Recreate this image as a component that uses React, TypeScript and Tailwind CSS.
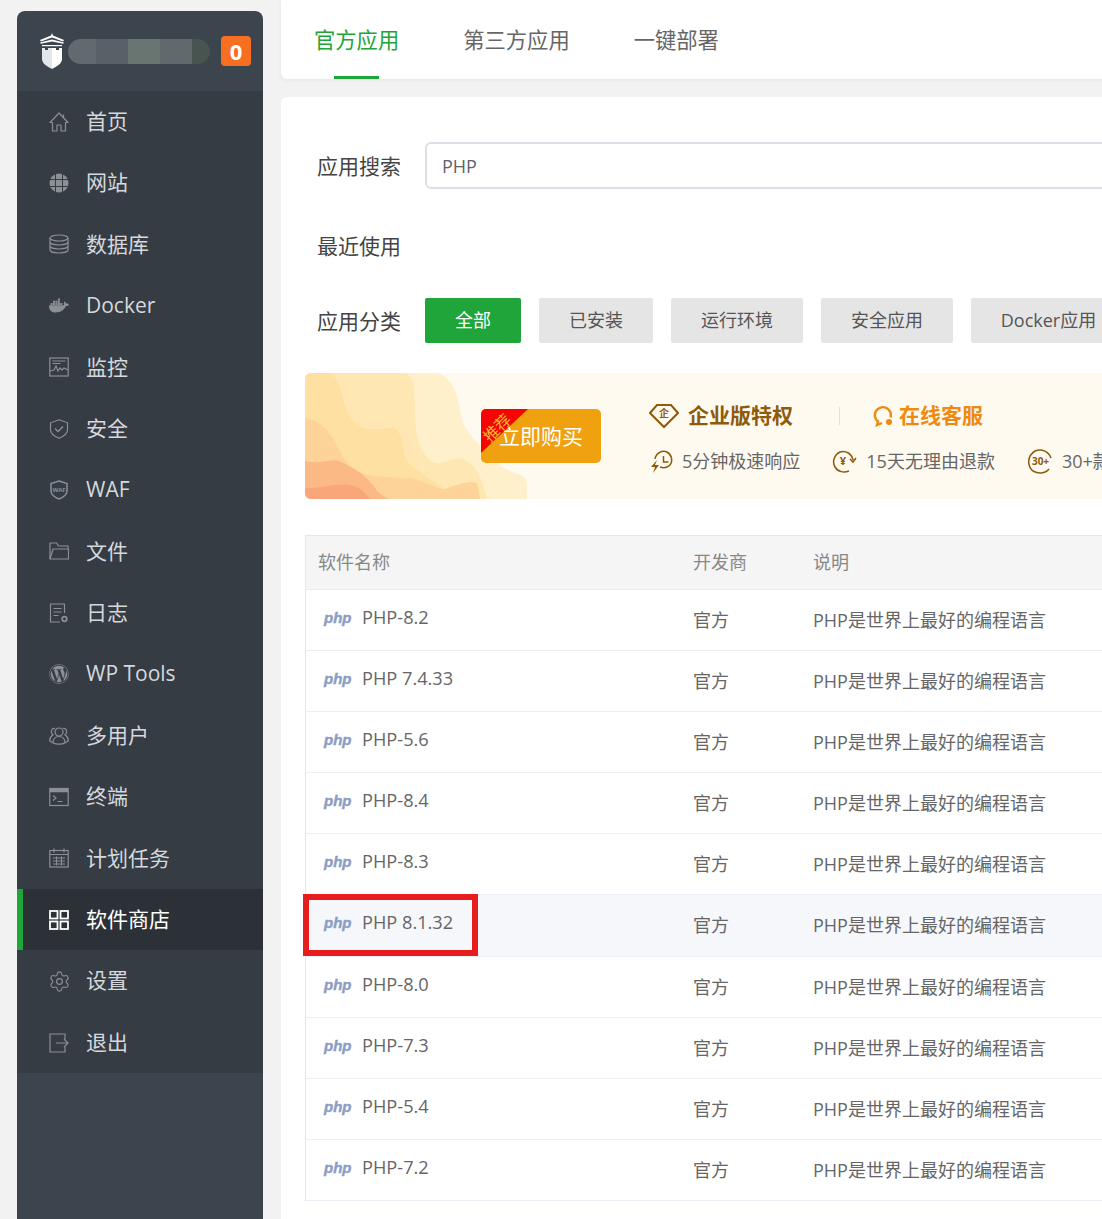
import type { ReactNode } from "react";
import { Settings } from "lucide-react";
import { FaDocker, FaWordpress } from "react-icons/fa";

const Svg = ({ children }: { children: ReactNode }) => (
    <svg width="20" height="20" viewBox="0 0 20 20" fill="none" stroke="currentColor" strokeWidth="1.2">
        {children}
    </svg>
);

const HomeIcon = () => (
    <Svg>
        <path d="M10 1L1 10.500h2.500V19H8v-6h4v6h4.500v-8.500H19z" strokeLinejoin="round" />
        <path d="M14.500 2.500v3" />
    </Svg>
);

const GlobeIcon = () => (
    <Svg>
        <circle cx="10" cy="10" r="9.500" fill="currentColor" stroke="none" />
        <path d="M0 6.500h20M0 13.500h20M6.500 0v20M13.500 0v20" stroke="#363c44" strokeWidth="1" />
    </Svg>
);

const DatabaseIcon = () => (
    <Svg>
        <ellipse cx="10" cy="4" rx="9" ry="3" />
        <path d="M1 4v12c0 1.700 4 3 9 3s9-1.300 9-3V4" />
        <path d="M1 8c0 1.700 4 3 9 3s9-1.300 9-3M1 12c0 1.700 4 3 9 3s9-1.300 9-3" />
    </Svg>
);

const MonitorIcon = () => (
    <Svg>
        <rect x="0.800" y="1" width="18.400" height="18" />
        <path d="M3.500 4h13M3.500 6.500h8" />
        <path d="M1 14l4-1 2-4 2 5 2-3 2 2 2-2 4 2" />
    </Svg>
);

const ShieldIcon = () => (
    <Svg>
        <path d="M10 0.800l8.500 3v7c0 3.600-4.500 6.800-8.500 8.400-4-1.600-8.500-4.800-8.500-8.400v-7z" />
        <path d="M6 9.500l3 3 5-5" strokeWidth="1.400" />
    </Svg>
);

const WafIcon = () => (
    <svg width="20" height="20" viewBox="0 0 20 20">
        <path d="M10 1l8 2.600v7.200c0 3.600-4 6.800-8 8.200-4-1.400-8-4.600-8-8.200V3.600z" fill="none" stroke="currentColor" strokeWidth="1.500" />
        <text x="10" y="11.500" textAnchor="middle" fontSize="6" fontWeight="700" fill="currentColor">WAF</text>
    </svg>
);

const FolderIcon = () => (
    <Svg>
        <path d="M1 18V2h6.500l2 3H19v3" />
        <path d="M1 18l3-10h15.500V18z" strokeLinejoin="round" />
    </Svg>
);

const LogIcon = () => (
    <Svg>
        <path d="M15.500 10V1H1.500v18H11" />
        <path d="M4.500 5.500h8M4.500 9h8M4.500 12.500h5" />
        <circle cx="15.500" cy="16" r="2.300" strokeWidth="1.700" />
    </Svg>
);

const UsersIcon = () => (
    <Svg>
        <circle cx="10" cy="6" r="4" />
        <path d="M4 17c0-4 2.500-6.500 6-6.500s6 2.500 6 6.500c-3 1.500-9 1.500-12 0z" />
        <path d="M6 2.500C3.500 2 2 4 2.500 6.500c.2 1 .8 1.700 1.500 2.200C2 10 .5 12 .8 15l3 1.500M14 2.500c2.500-.5 4 1.500 3.500 4-.2 1-.8 1.700-1.500 2.200 2 1.300 3.500 3.300 3.200 6.300l-3 1.500" />
    </Svg>
);

const TerminalIcon = () => (
    <Svg>
        <rect x="0.800" y="1.500" width="18.400" height="17" />
        <path d="M1 3.500h18" strokeWidth="3.500" />
        <path d="M4 8.500l3 2.500-3 2.500M8.500 14.500h5" />
    </Svg>
);

const CalendarIcon = () => (
    <Svg>
        <rect x="0.800" y="2.500" width="18.400" height="16.500" />
        <path d="M5 0.500v4M15 0.500v4M1 6.500h18" />
        <path d="M4 10h12M4 13h12M4 16h12M7.500 8.500v9M12.500 8.500v9" strokeWidth="1" />
    </Svg>
);

const GridIcon = () => (
    <Svg>
        <g strokeWidth="1.800">
            <rect x="1" y="1" width="7.500" height="7.500" />
            <rect x="11.500" y="1" width="7.500" height="7.500" />
            <rect x="1" y="11.500" width="7.500" height="7.500" />
            <rect x="11.500" y="11.500" width="7.500" height="7.500" />
        </g>
    </Svg>
);

const ExitIcon = () => (
    <Svg>
        <path d="M16 6V1H1v18h15v-5" />
        <path d="M7 10h12M15 6l4 4-4 4" />
    </Svg>
);

const menus: { name: string; icon: ReactNode }[] = [
    { name: "首页", icon: <HomeIcon /> },
    { name: "网站", icon: <GlobeIcon /> },
    { name: "数据库", icon: <DatabaseIcon /> },
    { name: "Docker", icon: <FaDocker size={21} /> },
    { name: "监控", icon: <MonitorIcon /> },
    { name: "安全", icon: <ShieldIcon /> },
    { name: "WAF", icon: <WafIcon /> },
    { name: "文件", icon: <FolderIcon /> },
    { name: "日志", icon: <LogIcon /> },
    { name: "WP Tools", icon: <FaWordpress size={20} /> },
    { name: "多用户", icon: <UsersIcon /> },
    { name: "终端", icon: <TerminalIcon /> },
    { name: "计划任务", icon: <CalendarIcon /> },
    { name: "软件商店", icon: <GridIcon /> },
    { name: "设置", icon: <Settings size={23} strokeWidth={1.200} className="shrink-0 -mx-[1.500px]" /> },
    { name: "退出", icon: <ExitIcon /> },
];

const filtros = [
    { name: "全部", w: "w-[96px]" },
    { name: "已安装", w: "w-[114px]" },
    { name: "运行环境", w: "w-[132px]" },
    { name: "安全应用", w: "w-[132px]" },
    { name: "Docker应用", w: "w-[155px]" },
];

const software = [
    "PHP-8.2", "PHP 7.4.33", "PHP-5.6", "PHP-8.4", "PHP-8.3",
    "PHP 8.1.32", "PHP-8.0", "PHP-7.3", "PHP-5.4", "PHP-7.2",
];

const Logo = () => (
    <svg width="26" height="36" viewBox="0 0 26 36" className="shrink-0">
        <path d="M13 0l1 2.500 11 4.500-1 1.500-11-4-11 4-1-1.500 11-4.500z" fill="#fff" />
        <path d="M1 9.500l12-3 12 3-.800 1.300L13 8.500 1.800 10.800z" fill="#fff" />
        <path d="M3 12h20v1.200H3z" fill="#fff" />
        <path d="M13 15H9v2H6v-2H3v11c0 4 4 7 10 10z" fill="#e4e6ea" />
        <path d="M13 15h4v2h3v-2h3v11c0 4-4 7-10 10z" fill="#fff" />
    </svg>
);

const Waves = () => (
    <svg width="223" height="126" viewBox="0 0 223 126" className="shrink-0">
        <path d="M0 0H132C148 4 153 22 156 42C160 62 176 72 195 92C205 102 222 98 222 112V126H0z" fill="#fff0cc" />
        <path d="M0 0H100C110 4 109 15 110 30C111 50 108 72 126 88C140 96 150 78 162 88C176 98 178 112 182 126H0z" fill="#ffe7b3" />
        <path d="M0 0H26C36 8 36 20 40 32C46 54 62 60 88 54C98 60 98 72 100 84C108 100 130 104 150 126H0z" fill="#ffe0a3" />
        <path d="M0 45C18 48 28 62 38 84C50 102 62 104 105 105C122 108 130 116 140 116C155 110 165 108 172 110L175 126H0z" fill="#fdd39a" />
        <path d="M0 88C18 92 28 84 36 89C50 96 62 102 72 118C76 122 80 124 84 126H0z" fill="#fbb985" />
        <path d="M0 115C14 116 30 110 45 112C55 114 60 120 65 126H0z" fill="#f9a67a" />
    </svg>
);

const DiamondIcon = () => (
    <svg width="30" height="26" viewBox="0 0 30 26" fill="none" stroke="#8e5a0b" strokeWidth="2" className="shrink-0">
        <path d="M8 2h14l7 8-14 14L1 10z" />
        <text x="15" y="14" textAnchor="middle" fontSize="10" fontWeight="700" fill="#8e5a0b" stroke="none">企</text>
    </svg>
);

const ChatIcon = () => (
    <svg width="23" height="22" viewBox="0 0 23 22" fill="none" stroke="#ee8a12" strokeWidth="2.400" className="shrink-0">
        <path d="M18.500 12.500A8 8 0 1 0 6 16.500L5 20l5-2" />
        <circle cx="17" cy="17" r="3" fill="#ee8a12" stroke="none" />
    </svg>
);

const SpeedIcon = () => (
    <svg width="25" height="25" viewBox="0 0 25 25" fill="none" stroke="#8e5a0b" strokeWidth="1.500" className="shrink-0">
        <path d="M6 10C7 4 13 1 18 3c5 3 6 9 3 13-3 3-7 3-10 2" />
        <path d="M14.500 7v6h5" />
        <path d="M8 11l-6 7h4l-2 6 6-8H6z" fill="#8e5a0b" stroke="none" />
    </svg>
);

const RefundIcon = () => (
    <svg width="25" height="25" viewBox="0 0 25 25" fill="none" stroke="#8e5a0b" strokeWidth="1.500" className="shrink-0">
        <path d="M21 11C20 5 14 1 8 3 2 6 0 13 3 18c3 5 9 6 14 4" />
        <path d="M18 10l3 3 3-4" />
        <text x="11" y="16" textAnchor="middle" fontSize="11" fontWeight="700" fill="#8e5a0b" stroke="none">¥</text>
    </svg>
);

const PluginIcon = () => (
    <svg width="25" height="25" viewBox="0 0 25 25" fill="none" stroke="#8e5a0b" strokeWidth="1.500" className="shrink-0">
        <path d="M23 9C21 3 14-1 7 2-1 7-1 17 5 22c5 3 12 3 16-2" />
        <text x="12.500" y="16" textAnchor="middle" fontSize="10" fontWeight="700" fill="#8e5a0b" stroke="none">30+</text>
    </svg>
);

export default function App() {
    return (
        <div className="flex w-[1102px] h-[1219px] overflow-hidden bg-[#f2f2f2] font-['Open_Sans','Noto_Sans_CJK_SC',sans-serif]">
            {/* Sidebar */}
            <aside className="w-[246px] shrink-0 ml-[17px] mt-[11px] mr-[18px] bg-[#3c444d] rounded-t-lg">
                <div className="flex items-center h-[80px] pl-[22px] pr-[12px]">
                    <Logo />
                    <div className="flex h-[25px] w-[142px] ml-[3px] rounded-full overflow-hidden blur-[0.5px]">
                        <div className="w-[28px] bg-[#626a70]" />
                        <div className="w-[32px] bg-[#596168]" />
                        <div className="w-[32px] bg-[#687571]" />
                        <div className="w-[32px] bg-[#62696c]" />
                        <div className="w-[18px] bg-[#47544f]" />
                    </div>
                    <span className="flex items-center justify-center w-[30px] h-[30px] ml-auto rounded-[4px] bg-[#f96f22] text-white text-[22px] font-bold">0</span>
                </div>
                <nav className="bg-[#363c44]">
                    {menus.map((item) => {
                        const activo = item.name === "软件商店";
                        return (
                            <div
                                key={item.name}
                                className={activo
                                    ? "flex items-center h-[61.4px] pl-[26px] gap-[17px] text-[21px] bg-[#2c3138] border-l-[6px] border-[#20a53a] text-white"
                                    : "flex items-center h-[61.4px] pl-[32px] gap-[17px] text-[21px] text-[#d5d8dc]"}
                            >
                                <span className={activo ? "flex w-[20px] text-white" : "flex w-[20px] text-[#8c9094]"}>{item.icon}</span>
                                <span>{item.name}</span>
                            </div>
                        );
                    })}
                </nav>
            </aside>

            {/* Contenido */}
            <main className="w-[1000px] shrink-0">
                <div className="flex h-[79px] pl-[33px] gap-[64px] bg-white rounded-b-md shadow-[0_1px_4px_rgba(0,0,0,0.06)] text-[21.3px] text-[#666666]">
                    <div className="relative flex items-center text-[#20a53a]">
                        官方应用
                        <span className="absolute bottom-0 left-[20px] w-[45px] h-[3px] bg-[#20a53a]" />
                    </div>
                    <div className="flex items-center">第三方应用</div>
                    <div className="flex items-center">一键部署</div>
                </div>

                <div className="mt-[18px] h-[1200px] pt-[45px] pl-[24px] bg-white rounded-t-md">
                    <div className="flex items-center pl-[12px]">
                        <label className="w-[108px] pt-[2px] text-[21px] text-[#444444]">应用搜索</label>
                        <input
                            readOnly
                            value="PHP"
                            className="w-[800px] h-[47px] px-[15px] border-2 border-[#dcdfe6] rounded-md text-[18px] text-[#606266] outline-none"
                        />
                    </div>
                    <div className="flex items-center h-[32px] mt-[42px] pl-[12px] text-[21px] text-[#444444]">最近使用</div>
                    <div className="flex items-center mt-[35px] pl-[12px]">
                        <label className="w-[108px] pt-[2px] text-[21px] text-[#444444]">应用分类</label>
                        <div className="flex gap-[18px]">
                            {filtros.map((item, index) => (
                                <button
                                    key={item.name}
                                    className={index === 0
                                        ? `${item.w} h-[45px] shrink-0 rounded-[2px] bg-[#20a53a] text-white text-[18px]`
                                        : `${item.w} h-[45px] shrink-0 rounded-[2px] bg-[#e5e5e5] text-[#555555] text-[18px]`}
                                >
                                    {item.name}
                                </button>
                            ))}
                        </div>
                    </div>

                    {/* Banner */}
                    <div className="flex h-[126px] mt-[30px] w-[900px] bg-[#fffaf0] rounded-md overflow-hidden">
                        <Waves />
                        <div className="relative shrink-0 self-start mt-[36px] ml-[-47px] w-[120px] h-[54px] pt-[2px] rounded-[5px] bg-[#f0a10f] overflow-hidden flex items-center justify-center text-white text-[21px]">
                            <span>立即购买</span>
                            <span className="absolute left-0 top-0 w-0 h-0 border-t-[44px] border-r-[47px] border-t-[#f60303] border-r-transparent" />
                            <span className="absolute left-0 top-[11px] text-[16px] leading-none text-[#f9b62d] -rotate-45">推荐</span>
                        </div>
                        <div className="ml-[48px] pt-[30px]">
                            <div className="flex items-center h-[26px]">
                                <DiamondIcon />
                                <span className="ml-[9px] text-[21px] font-bold text-[#8e5a0b]">企业版特权</span>
                                <span className="ml-[46px] w-px h-[18px] bg-[#e8e2d5]" />
                                <span className="ml-[32px]"><ChatIcon /></span>
                                <span className="ml-[4px] text-[21px] font-bold text-[#ee8a12]">在线客服</span>
                            </div>
                            <div className="flex items-center h-[25px] mt-[20px] text-[18px] text-[#666666] whitespace-nowrap">
                                <SpeedIcon />
                                <span className="ml-[8px]">5分钟极速响应</span>
                                <span className="ml-[32px]"><RefundIcon /></span>
                                <span className="ml-[9px]">15天无理由退款</span>
                                <span className="ml-[33px]"><PluginIcon /></span>
                                <span className="ml-[9px]">30+款付费插件</span>
                            </div>
                        </div>
                    </div>

                    {/* Tabla */}
                    <div className="mt-[36px] w-[900px] border-l border-t border-[#e6e6e6] text-[18px] text-[#666666]">
                        <div className="flex items-center h-[54px] bg-[#f5f5f5] border-b border-[#ebeef5] text-[#888888]">
                            <div className="w-[375px] pl-[12px]">软件名称</div>
                            <div className="w-[120px] pl-[12px]">开发商</div>
                            <div className="pl-[12px]">说明</div>
                        </div>
                        {software.map((item) => {
                            const marcado = item === "PHP 8.1.32";
                            return (
                                <div
                                    key={item}
                                    className={marcado
                                        ? "relative flex items-center h-[62px] bg-[#f5f7fa] border-b border-[#ebeef5]"
                                        : "relative flex items-center h-[61px] border-b border-[#ebeef5]"}
                                >
                                    <div className="flex items-center w-[375px] pl-[18px] pb-[5px]">
                                        <span className="w-[38px] text-[15px] leading-none font-bold italic text-[#8b9dc3] [-webkit-text-stroke:0.4px_#8b9dc3] font-['Liberation_Sans',sans-serif]">php</span>
                                        <span className="text-[18.2px]">{item}</span>
                                    </div>
                                    <div className="w-[120px] pl-[12px]">官方</div>
                                    <div className="pl-[12px]">PHP是世界上最好的编程语言</div>
                                    {marcado && (
                                        <span className="absolute left-[-3px] top-[-1px] w-[175px] h-[62px] border-[6px] border-[#e71c1c]" />
                                    )}
                                </div>
                            );
                        })}
                    </div>
                </div>
            </main>
        </div>
    );
}
